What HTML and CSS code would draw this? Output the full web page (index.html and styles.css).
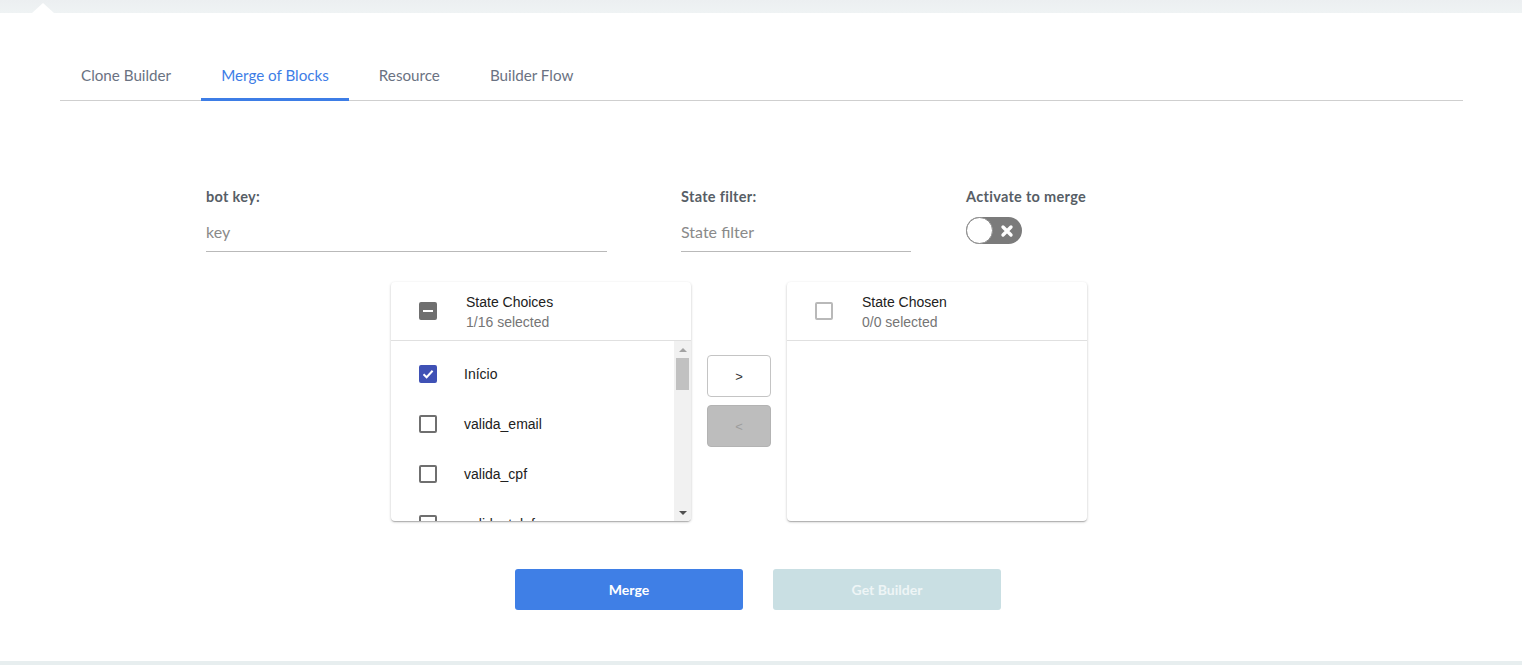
FILE: index.html
```html
<!DOCTYPE html>
<html>
<head>
<meta charset="utf-8">
<link rel="stylesheet" href="styles.css">
</head>
<body>
<div class="topbar"><span class="notch"></span></div>
<main class="panel">
  <nav class="tabs">
    <div class="tab">Clone Builder</div>
    <div class="tab active">Merge of Blocks</div>
    <div class="tab">Resource</div>
    <div class="tab">Builder Flow</div>
  </nav>

  <section class="form">
    <div class="field field-key">
      <label class="label">bot key:</label>
      <div class="input"><span class="placeholder">key</span></div>
    </div>
    <div class="field field-filter">
      <label class="label">State filter:</label>
      <div class="input"><span class="placeholder">State filter</span></div>
    </div>
    <div class="field field-toggle">
      <label class="label">Activate to merge</label>
      <div class="toggle">
        <span class="knob"></span>
        <svg class="toggle-x" width="14" height="14" viewBox="0 0 14 14"><path d="M3 3 L11 11 M11 3 L3 11" stroke="#fff" stroke-width="3.4" stroke-linecap="round"/></svg>
      </div>
    </div>
  </section>

  <section class="transfer">
    <div class="card">
      <div class="card-head">
        <span class="cb cb-indeterminate"><span class="dash"></span></span>
        <div class="head-text">
          <div class="head-title">State Choices</div>
          <div class="head-sub">1/16 selected</div>
        </div>
      </div>
      <div class="card-body">
        <ul class="items">
          <li class="item"><span class="cb cb-checked"><svg width="14" height="14" viewBox="0 0 14 14"><path d="M2.5 7.2 L5.6 10.2 L11.6 3.8" fill="none" stroke="#fff" stroke-width="2"/></svg></span><span class="item-text">Início</span></li>
          <li class="item"><span class="cb"></span><span class="item-text">valida_email</span></li>
          <li class="item"><span class="cb"></span><span class="item-text">valida_cpf</span></li>
          <li class="item"><span class="cb"></span><span class="item-text">valida_telefone</span></li>
        </ul>
        <div class="scrollbar">
          <span class="arrow arrow-up"></span>
          <span class="thumb"></span>
          <span class="spacer"></span>
          <span class="arrow arrow-down"></span>
        </div>
      </div>
    </div>

    <div class="moves">
      <button class="move">&gt;</button>
      <button class="move disabled">&lt;</button>
    </div>

    <div class="card">
      <div class="card-head">
        <span class="cb cb-disabled"></span>
        <div class="head-text">
          <div class="head-title">State Chosen</div>
          <div class="head-sub">0/0 selected</div>
        </div>
      </div>
      <div class="card-body"></div>
    </div>
  </section>

  <section class="actions">
    <button class="btn btn-primary">Merge</button>
    <button class="btn btn-disabled">Get Builder</button>
  </section>
</main>
<div class="bottombar"></div>
</body>
</html>
```
FILE: styles.css
```css
* { box-sizing: border-box; }
html, body { margin: 0; padding: 0; }
body {
  background: #eef2f3;
  font-family: Lato, "Open Sans", sans-serif;
  height: 665px;
  overflow: hidden;
}
.topbar {
  height: 13px;
  position: relative;
  background: linear-gradient(to bottom, #eceff1, #eff3f4);
}
.notch {
  position: absolute;
  left: 32px;
  top: 3px;
  width: 0;
  height: 0;
  border-left: 11px solid transparent;
  border-right: 11px solid transparent;
  border-bottom: 10px solid #fff;
}
.panel {
  background: #fff;
  height: 648px;
  padding-top: 40px;
}
.tabs {
  display: flex;
  margin: 0 59px 0 60px;
  padding-left: 1px;
  border-bottom: 1px solid #cfcfcf;
}
.tab {
  height: 48px;
  padding: 0 20px 1px 20px;
  margin-right: 10px;
  margin-bottom: -1px;
  border-bottom: 3px solid transparent;
  display: flex;
  align-items: center;
  font-size: 15.2px;
  color: #6a7282;
}
.tab.active {
  color: #3d7de6;
  border-bottom-color: #3d7de6;
}

.form {
  display: flex;
  margin-top: 88px;
  padding-left: 206px;
}
.field { display: flex; flex-direction: column; }
.label {
  font-size: 14.5px;
  font-weight: 700;
  letter-spacing: 0.3px;
  color: #575e66;
  line-height: 16px;
  height: 16px;
}
.input {
  margin-top: 11px;
  height: 36px;
  border-bottom: 1px solid #b9b9b9;
  display: flex;
  align-items: center;
  padding-bottom: 5px;
}
.placeholder {
  font-size: 16px;
  color: #8a8a8a;
}
.field-key { width: 401px; }
.field-filter { width: 230px; margin-left: 74px; }
.field-toggle { margin-left: 55px; }
.toggle {
  margin-top: 12px;
  width: 56px;
  height: 27px;
  border-radius: 14px;
  background: #7b7b7b;
  position: relative;
  display: flex;
  align-items: center;
  justify-content: flex-end;
  padding-right: 8px;
}
.knob {
  position: absolute;
  left: 0;
  top: 0;
  width: 27px;
  height: 27px;
  border-radius: 50%;
  background: #fff;
  border: 1px solid #8c8c8c;
}

.transfer {
  display: flex;
  margin-top: 30px;
  padding-left: 391px;
}
.card {
  width: 300px;
  height: 239px;
  background: #fff;
  border-radius: 4px;
  box-shadow: 0 1px 3px rgba(0,0,0,0.2), 0 1px 1px rgba(0,0,0,0.12), 0 2px 1px -1px rgba(0,0,0,0.1);
  display: flex;
  flex-direction: column;
  overflow: hidden;
}
.card-head {
  height: 59px;
  border-bottom: 1px solid #e0e0e0;
  display: flex;
  align-items: center;
  padding-left: 28px;
  font-family: "Liberation Sans", Arial, sans-serif;
}
.head-text { margin-left: 29px; padding-top: 1px; }
.head-title { font-size: 14px; color: #212121; line-height: 20px; }
.head-sub { font-size: 14px; color: #757575; line-height: 20px; }

.cb {
  width: 18px;
  height: 18px;
  border: 2px solid #6f6f6f;
  border-radius: 2px;
  display: flex;
  align-items: center;
  justify-content: center;
  flex: none;
}
.cb-indeterminate { background: #6f6f6f; }
.cb-indeterminate .dash { width: 10px; height: 2px; background: #fff; }
.cb-checked { background: #3f51b5; border-color: #3f51b5; }
.cb-disabled { border-color: #b9b9b9; }

.card-body {
  flex: 1;
  display: flex;
  overflow: hidden;
}
.items {
  list-style: none;
  margin: 0;
  padding: 8px 0 0 0;
  flex: 1;
  overflow: hidden;
  font-family: "Liberation Sans", Arial, sans-serif;
}
.item {
  height: 50px;
  display: flex;
  align-items: center;
  padding-left: 28px;
}
.item-text {
  margin-left: 27px;
  font-size: 14px;
  color: #212121;
}
.scrollbar {
  width: 17px;
  background: #f1f1f1;
  display: flex;
  flex-direction: column;
  align-items: center;
}
.arrow {
  height: 17px;
  width: 17px;
  display: flex;
  align-items: center;
  justify-content: center;
  flex: none;
}
.arrow::before {
  content: "";
  width: 0;
  height: 0;
  border-left: 4px solid transparent;
  border-right: 4px solid transparent;
}
.arrow-up::before { border-bottom: 4px solid #a3a3a3; }
.arrow-down::before { border-top: 4px solid #505050; }
.thumb {
  width: 13px;
  height: 32px;
  background: #c1c1c1;
  flex: none;
}
.spacer { flex: 1; }

.moves {
  width: 96px;
  display: flex;
  flex-direction: column;
  align-items: center;
  padding-top: 73px;
  gap: 8px;
}
.move {
  width: 64px;
  height: 42px;
  border-radius: 4px;
  border: 1px solid #c4c4c4;
  background: #fff;
  color: #333;
  font-family: "Liberation Sans", Arial, sans-serif;
  font-size: 13px;
  padding: 0;
}
.move.disabled {
  background: #bdbdbd;
  border-color: #b3b3b3;
  color: #9e9e9e;
}

.actions {
  display: flex;
  gap: 30px;
  margin-top: 48px;
  padding-left: 515px;
}
.btn {
  width: 228px;
  height: 41px;
  border: none;
  border-radius: 3px;
  font-family: Lato, "Open Sans", sans-serif;
  font-weight: 700;
  font-size: 14px;
  color: #fff;
  padding: 0;
}
.btn-primary { background: #3f7fe6; }
.btn-disabled { background: #c9dfe3; color: #eef5f6; }

.bottombar {
  height: 4px;
  background: #e7eeef;
}
```
